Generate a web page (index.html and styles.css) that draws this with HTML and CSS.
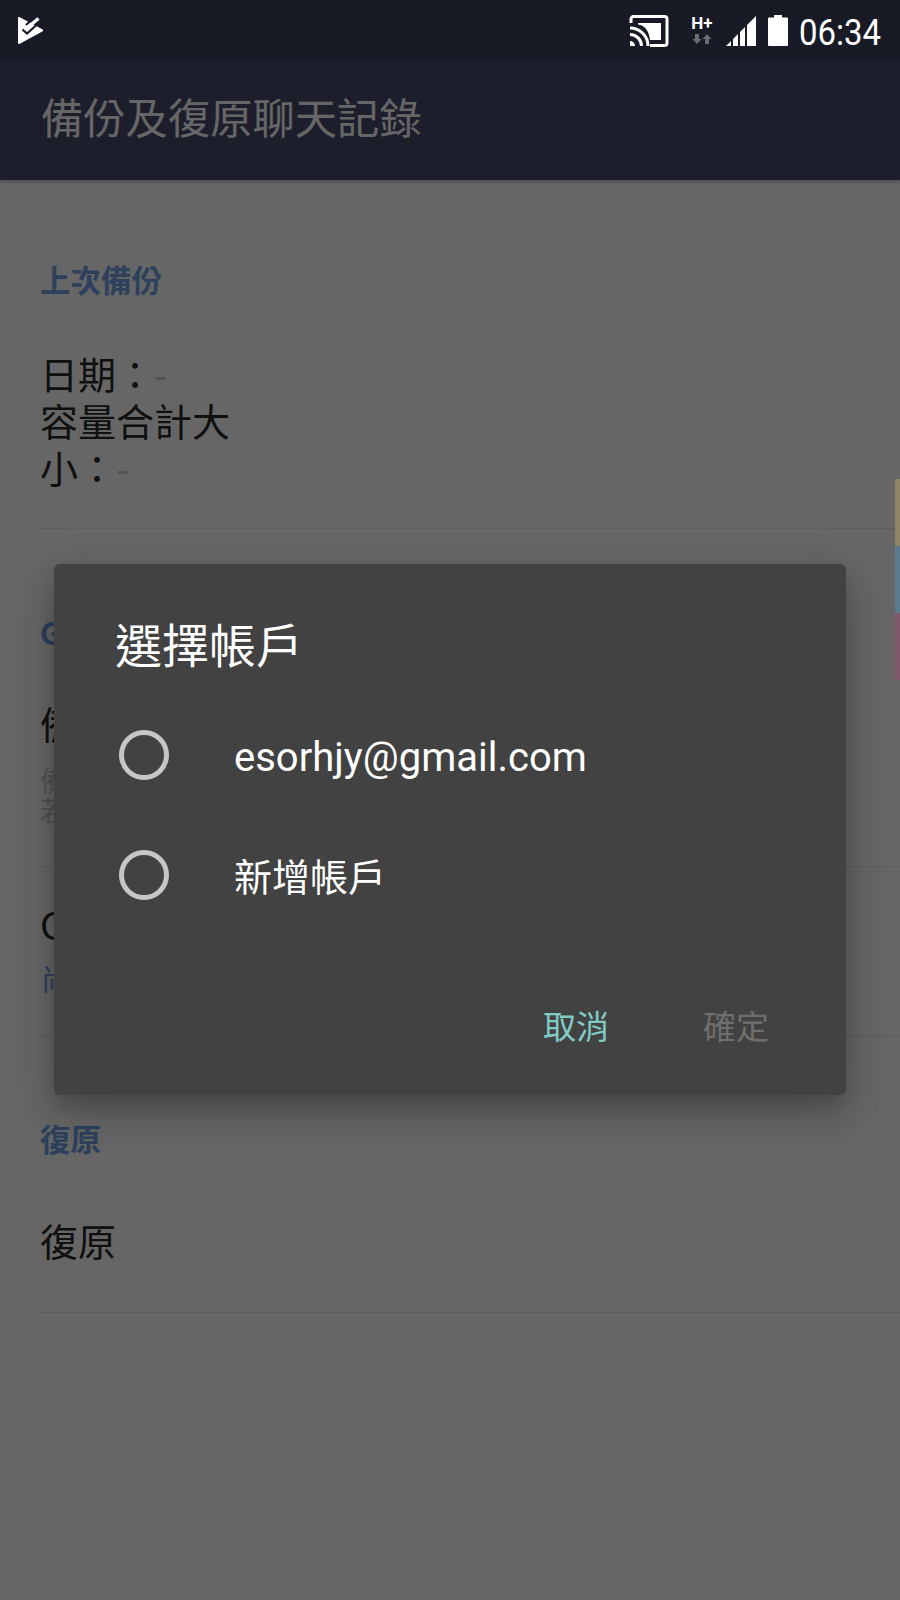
FILE: index.html
```html
<!DOCTYPE html>
<html lang="zh-Hant">
<head>
<meta charset="utf-8">
<title>備份及復原聊天記錄</title>
<link rel="stylesheet" href="styles.css">
</head>
<body>
<div class="phone">
  <header class="status">
    <svg class="logo" viewBox="0 0 26 28" width="26" height="28">
      <path fill="#fff" d="M1.800.300 24.300 12.300c1 .6 1 1.700 0 2.300L1.800 26.800C.8 27.300 0 26.800 0 25.800V1.300C0 .3.800-.2 1.800.300Z"/>
      <path fill="none" stroke="#181b25" stroke-width="2.200" d="M8 8 16.500 .5"/>
      <path fill="none" stroke="#fff" stroke-width="3.400" d="M10 10 20.500 1.500"/>
      <path fill="none" stroke="#181b25" stroke-width="2.200" d="M4.500 12.500 9 16.500 18 8.500"/>
    </svg>
    <div class="status-right">
      <svg class="cast" viewBox="0 0 40 32" width="40" height="32"><path fill="none" stroke="#fff" stroke-width="3" d="M2 8V4a2.500 2.500 0 0 1 2.500-2.500h31A2.500 2.500 0 0 1 38 4v24a2.500 2.500 0 0 1-2.500 2.500H21"/><path fill="#fff" d="M9 8h23v17H21C20 16 16 10.500 9 9.500Z"/><path fill="#fff" d="M1 26v5h5c0-2.800-2.200-5-5-5Z"/><path fill="none" stroke="#fff" stroke-width="3" d="M1 19.500c6.400 0 11.500 5.100 11.500 11.500M1 13c10 0 18 8 18 18"/></svg>
      <div class="net"><span class="net-type">H+</span>
        <svg viewBox="0 0 20 10" width="20" height="10"><path fill="#6b6b70" d="M3 0h4v5h2.500L5 10 .5 5H3ZM13 10h4V5h2.500L15 0l-4.500 5H13Z"/></svg>
      </div>
      <svg class="signal" viewBox="0 0 31 31" width="31" height="31"><path fill="#fff" d="M0 31l5-5v5ZM7 31v-7l5-5v12ZM14 31V17l5-5v19ZM21 31V10l9-9v30Z"/></svg>
      <svg class="battery" viewBox="0 0 20 31" width="20" height="31"><path fill="#fff" d="M6 0h8v2.500h5a1 1 0 0 1 1 1V30a1 1 0 0 1-1 1H1a1 1 0 0 1-1-1V3.500a1 1 0 0 1 1-1h5Z"/></svg>
      <span class="time">06:34</span>
    </div>
  </header>

  <div class="screen">
    <div class="appbar"><h1 class="appbar-title">備份及復原聊天記錄</h1></div>
    <main class="content">
      <section class="group">
        <h2 class="heading">上次備份</h2>
        <div class="row row-info">
          <p class="body-text">日期：<span class="dash">-</span><br>容量合計大<br>小：<span class="dash">-</span></p>
        </div>
      </section>
      <section class="group">
        <h2 class="heading heading-google">Google 雲端硬碟</h2>
        <div class="row row-backup">
          <p class="body-text">備份至 Google 雲端硬碟</p>
          <p class="sub-text">備份聊天記錄至 Google 雲端硬碟<br>若要備份聊天記錄請先選擇帳戶</p>
        </div>
        <div class="row row-account">
          <p class="body-text">Google 帳戶</p>
          <p class="link-text">尚未選擇帳戶</p>
        </div>
      </section>
      <section class="group">
        <h2 class="heading heading-restore">復原</h2>
        <div class="row row-restore"><p class="body-text">復原</p></div>
      </section>
    </main>
    <div class="scrim"></div>
    <div class="tabs"><span class="tab tab-y"></span><span class="tab tab-b"></span><span class="tab tab-p"></span></div>
    <div class="dialog">
      <h3 class="dialog-title">選擇帳戶</h3>
      <ul class="options">
        <li class="option"><span class="radio"></span><span class="option-label latin">esorhjy@gmail.com</span></li>
        <li class="option"><span class="radio"></span><span class="option-label">新增帳戶</span></li>
      </ul>
      <div class="actions">
        <button class="action action-cancel">取消</button>
        <button class="action action-ok">確定</button>
      </div>
    </div>
  </div>
</div>
</body>
</html>
```
FILE: styles.css
```css
* { box-sizing: border-box; }
html, body { margin: 0; padding: 0; }
body { width: 900px; height: 1600px; overflow: hidden; background: #fff;
  font-family: Roboto, "Noto Sans CJK TC", sans-serif; }
.phone { width: 900px; height: 1600px; display: flex; flex-direction: column; }
h1, h2, h3, p, ul { margin: 0; padding: 0; font-weight: 400; }
ul { list-style: none; }

.status { height: 60px; flex: none; background: #181b25; display: flex; align-items: center;
  justify-content: space-between; padding: 0 19px 0 18px; color: #fff; }
.logo { display: block; margin-top: 1px; }
.status-right { display: flex; align-items: center; }
.cast { display: block; margin: 1px 22px 0 0; }
.net { display: flex; flex-direction: column; align-items: center; width: 22px; margin-right: 13px; }
.net-type { font: 700 17px/15px Roboto, sans-serif; }
.net svg { display: block; margin-top: 3px; }
.signal { display: block; margin-right: 11px; }
.battery { display: block; margin-right: 11px; }
.time { display: block; width: 82px; margin-top: 6px; font: 400 37px/40px Roboto, sans-serif; white-space: nowrap;
  transform: scaleX(.89); transform-origin: left center; }

.screen { position: relative; flex: 1; background: #fff; overflow: hidden; }
.appbar { height: 120px; background: #474c6c; display: flex; align-items: center; padding: 0 0 8px 41px;
  box-shadow: 0 2px 3px rgba(0,0,0,.25); }
.appbar-title { font-size: 42.300px; line-height: 60px; color: #fff; font-family: "Noto Sans CJK TC", sans-serif; }

.content { padding: 76px 0 0 39px; font-family: "Noto Sans CJK TC", sans-serif; }
.heading { font-size: 30.500px; line-height: 46px; font-weight: 700; color: #70a4e8; padding-left: 1px; white-space: nowrap; }
.row { border-bottom: 1px solid #eaeaea; padding-left: 1px; }
.row-info { padding-top: 47px; height: 227px; }
.row-info .body-text { width: 192px; }
.body-text { font-size: 38px; line-height: 47px; color: #2a2a2a; }
.dash { color: #c8cdd5; font-size: 38px; }
.sub-text { font-size: 28px; line-height: 30px; color: #c8cdd5; white-space: nowrap; margin-top: 19px; }
.link-text { font-size: 30px; line-height: 40px; color: #70a4e8; margin-top: 10px; padding-left: 1px; }
.heading-google { margin-top: 80px; }
.row-backup { height: 212px; padding-top: 44px; }
.row-account { height: 170px; padding-top: 33px; }
.heading-restore { margin-top: 78px; }
.row-restore { height: 152px; padding-top: 55px; }

.scrim { position: absolute; inset: 0; background: rgba(0,0,0,.6); }
.tabs { position: absolute; right: 0; top: 419px; width: 5px; display: flex; flex-direction: column; }
.tab { display: block; height: 67px; }
.tab-y { background: #8f8563; }
.tab-b { background: #5b7a8e; }
.tab-p { background: #80596c; }

.dialog { position: absolute; left: 54px; top: 504px; width: 792px; height: 531px; background: #424242;
  border-radius: 6px; box-shadow: 0 24px 38px rgba(0,0,0,.14), 0 9px 46px rgba(0,0,0,.12), 0 11px 15px rgba(0,0,0,.1);
  color: #fff; font-family: "Noto Sans CJK TC", sans-serif; display: flex; flex-direction: column; }
.dialog-title { font-size: 47px; line-height: 60px; padding: 49px 0 0 61px; box-sizing: content-box; }
.options { margin-top: 22px; }
.option { height: 120px; display: flex; align-items: center; padding-left: 65px; }
.radio { width: 50px; height: 50px; border: 5px solid #c6c6c6; border-radius: 50%; flex: none; }
.option-label { margin-left: 65px; font-size: 38px; line-height: 50px; }
.latin { font-family: Roboto, sans-serif; font-size: 40px; padding-top: 6px; }
.actions { display: flex; justify-content: flex-end; margin-top: 68px; padding-right: 77px; gap: 94px; }
.action { background: none; border: 0; padding: 0; font: 400 33px/44px "Noto Sans CJK TC", sans-serif; }
.action-cancel { color: #80cbc4; }
.action-ok { color: #6e6e6e; }
```
